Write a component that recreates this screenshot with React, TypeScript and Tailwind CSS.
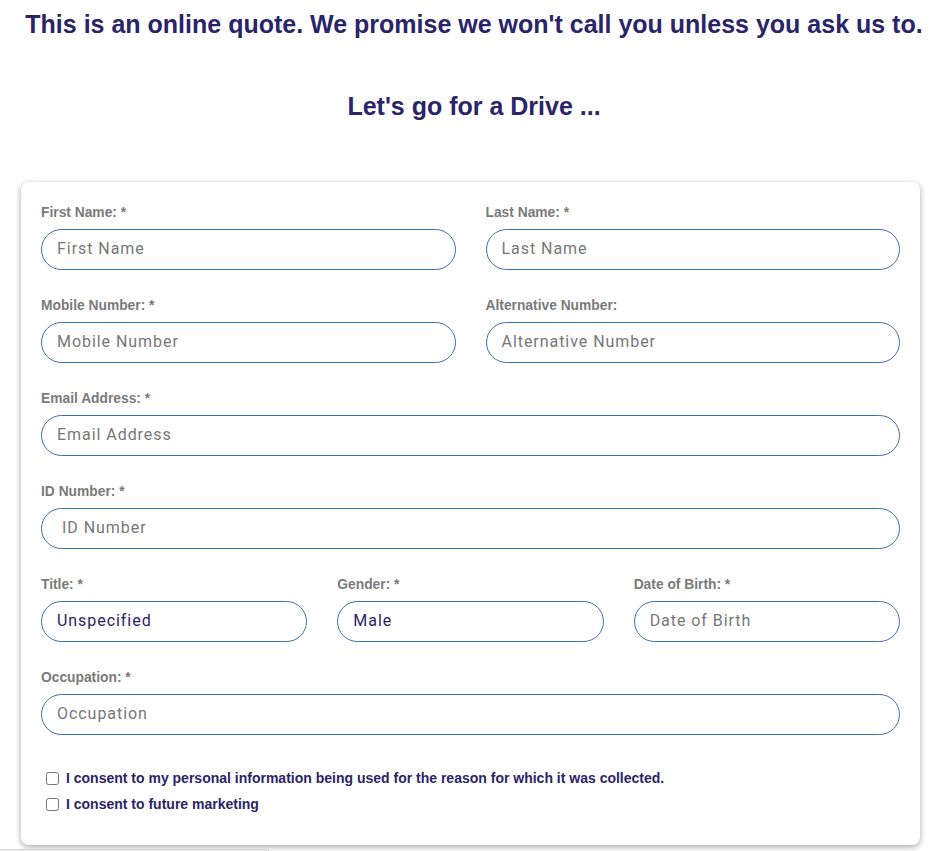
import React from "react";

const navy = "text-[#2a2468]";

function Field({ label, placeholder, value, className = "", pad = "pl-[15px]" }: { label: string; placeholder?: string; value?: string; className?: string; pad?: string }) {
  return (
    <div className={`flex flex-col ${className}`}>
      <label className="mb-[8px] mt-[1px] h-[16px] font-['Liberation_Sans',Arial,sans-serif] text-[13.8px] font-bold leading-[16px] text-[#7a7a7a]">
        {label}
      </label>
      <input
        readOnly
        placeholder={placeholder}
        defaultValue={value}
        className={`h-[41px] w-full rounded-full border border-[#3b6fb3] bg-white ${pad} pr-4 pb-[2px] font-['Roboto',sans-serif] text-[16px] tracking-[0.95px] text-[#2a2468] outline-none placeholder:text-[#777]`}
      />
    </div>
  );
}

export default function App() {
  return (
    <div className="min-h-[851px] bg-white font-['Liberation_Sans',Arial,sans-serif]">
      <div className="flex flex-col items-center pt-[9px]">
        <h1 className={`text-[25px] font-bold leading-[30px] ${navy}`}>
          This is an online quote. We promise we won't call you unless you ask us to.
        </h1>
        <h2 className={`mt-[52px] text-[25px] font-bold leading-[30px] ${navy}`}>Let's go for a Drive ...</h2>
      </div>

      <div className="ml-[21px] mt-[61px] w-[899px] rounded-lg bg-white px-5 pb-[32px] pt-[22px] shadow-[0_2px_6px_rgba(0,0,0,0.35)]">
        <div className="grid grid-cols-2 gap-x-[30px] gap-y-[27px]">
          <Field label="First Name: *" placeholder="First Name" />
          <Field label="Last Name: *" placeholder="Last Name" />
          <Field label="Mobile Number: *" placeholder="Mobile Number" />
          <Field label="Alternative Number:" placeholder="Alternative Number" />
          <Field label="Email Address: *" placeholder="Email Address" className="col-span-2" />
          <Field label="ID Number: *" placeholder="ID Number" className="col-span-2" pad="pl-[20px]" />
          <div className="col-span-2 grid grid-cols-3 gap-x-[30px]">
            <Field label="Title: *" value="Unspecified" />
            <Field label="Gender: *" value="Male" />
            <Field label="Date of Birth: *" placeholder="Date of Birth" />
          </div>
          <Field label="Occupation: *" placeholder="Occupation" className="col-span-2" />
        </div>

        <div className="mt-[35px] flex flex-col gap-[9px] pl-[5px]">
          <label className={`flex items-center gap-[7px] text-[14px] font-bold leading-[17px] ${navy}`}>
            <input type="checkbox" className="h-[13px] w-[13px] accent-[#3b6fb3]" />
            I consent to my personal information being used for the reason for which it was collected.
          </label>
          <label className={`flex items-center gap-[7px] text-[14px] font-bold leading-[17px] ${navy}`}>
            <input type="checkbox" className="h-[13px] w-[13px] accent-[#3b6fb3]" />
            I consent to future marketing
          </label>
        </div>
      </div>

      <div className="mt-[4px] h-[4px] w-[270px] rounded-tr border-t border-r border-[#d4d4d4] bg-[#ececec]" />
    </div>
  );
}
